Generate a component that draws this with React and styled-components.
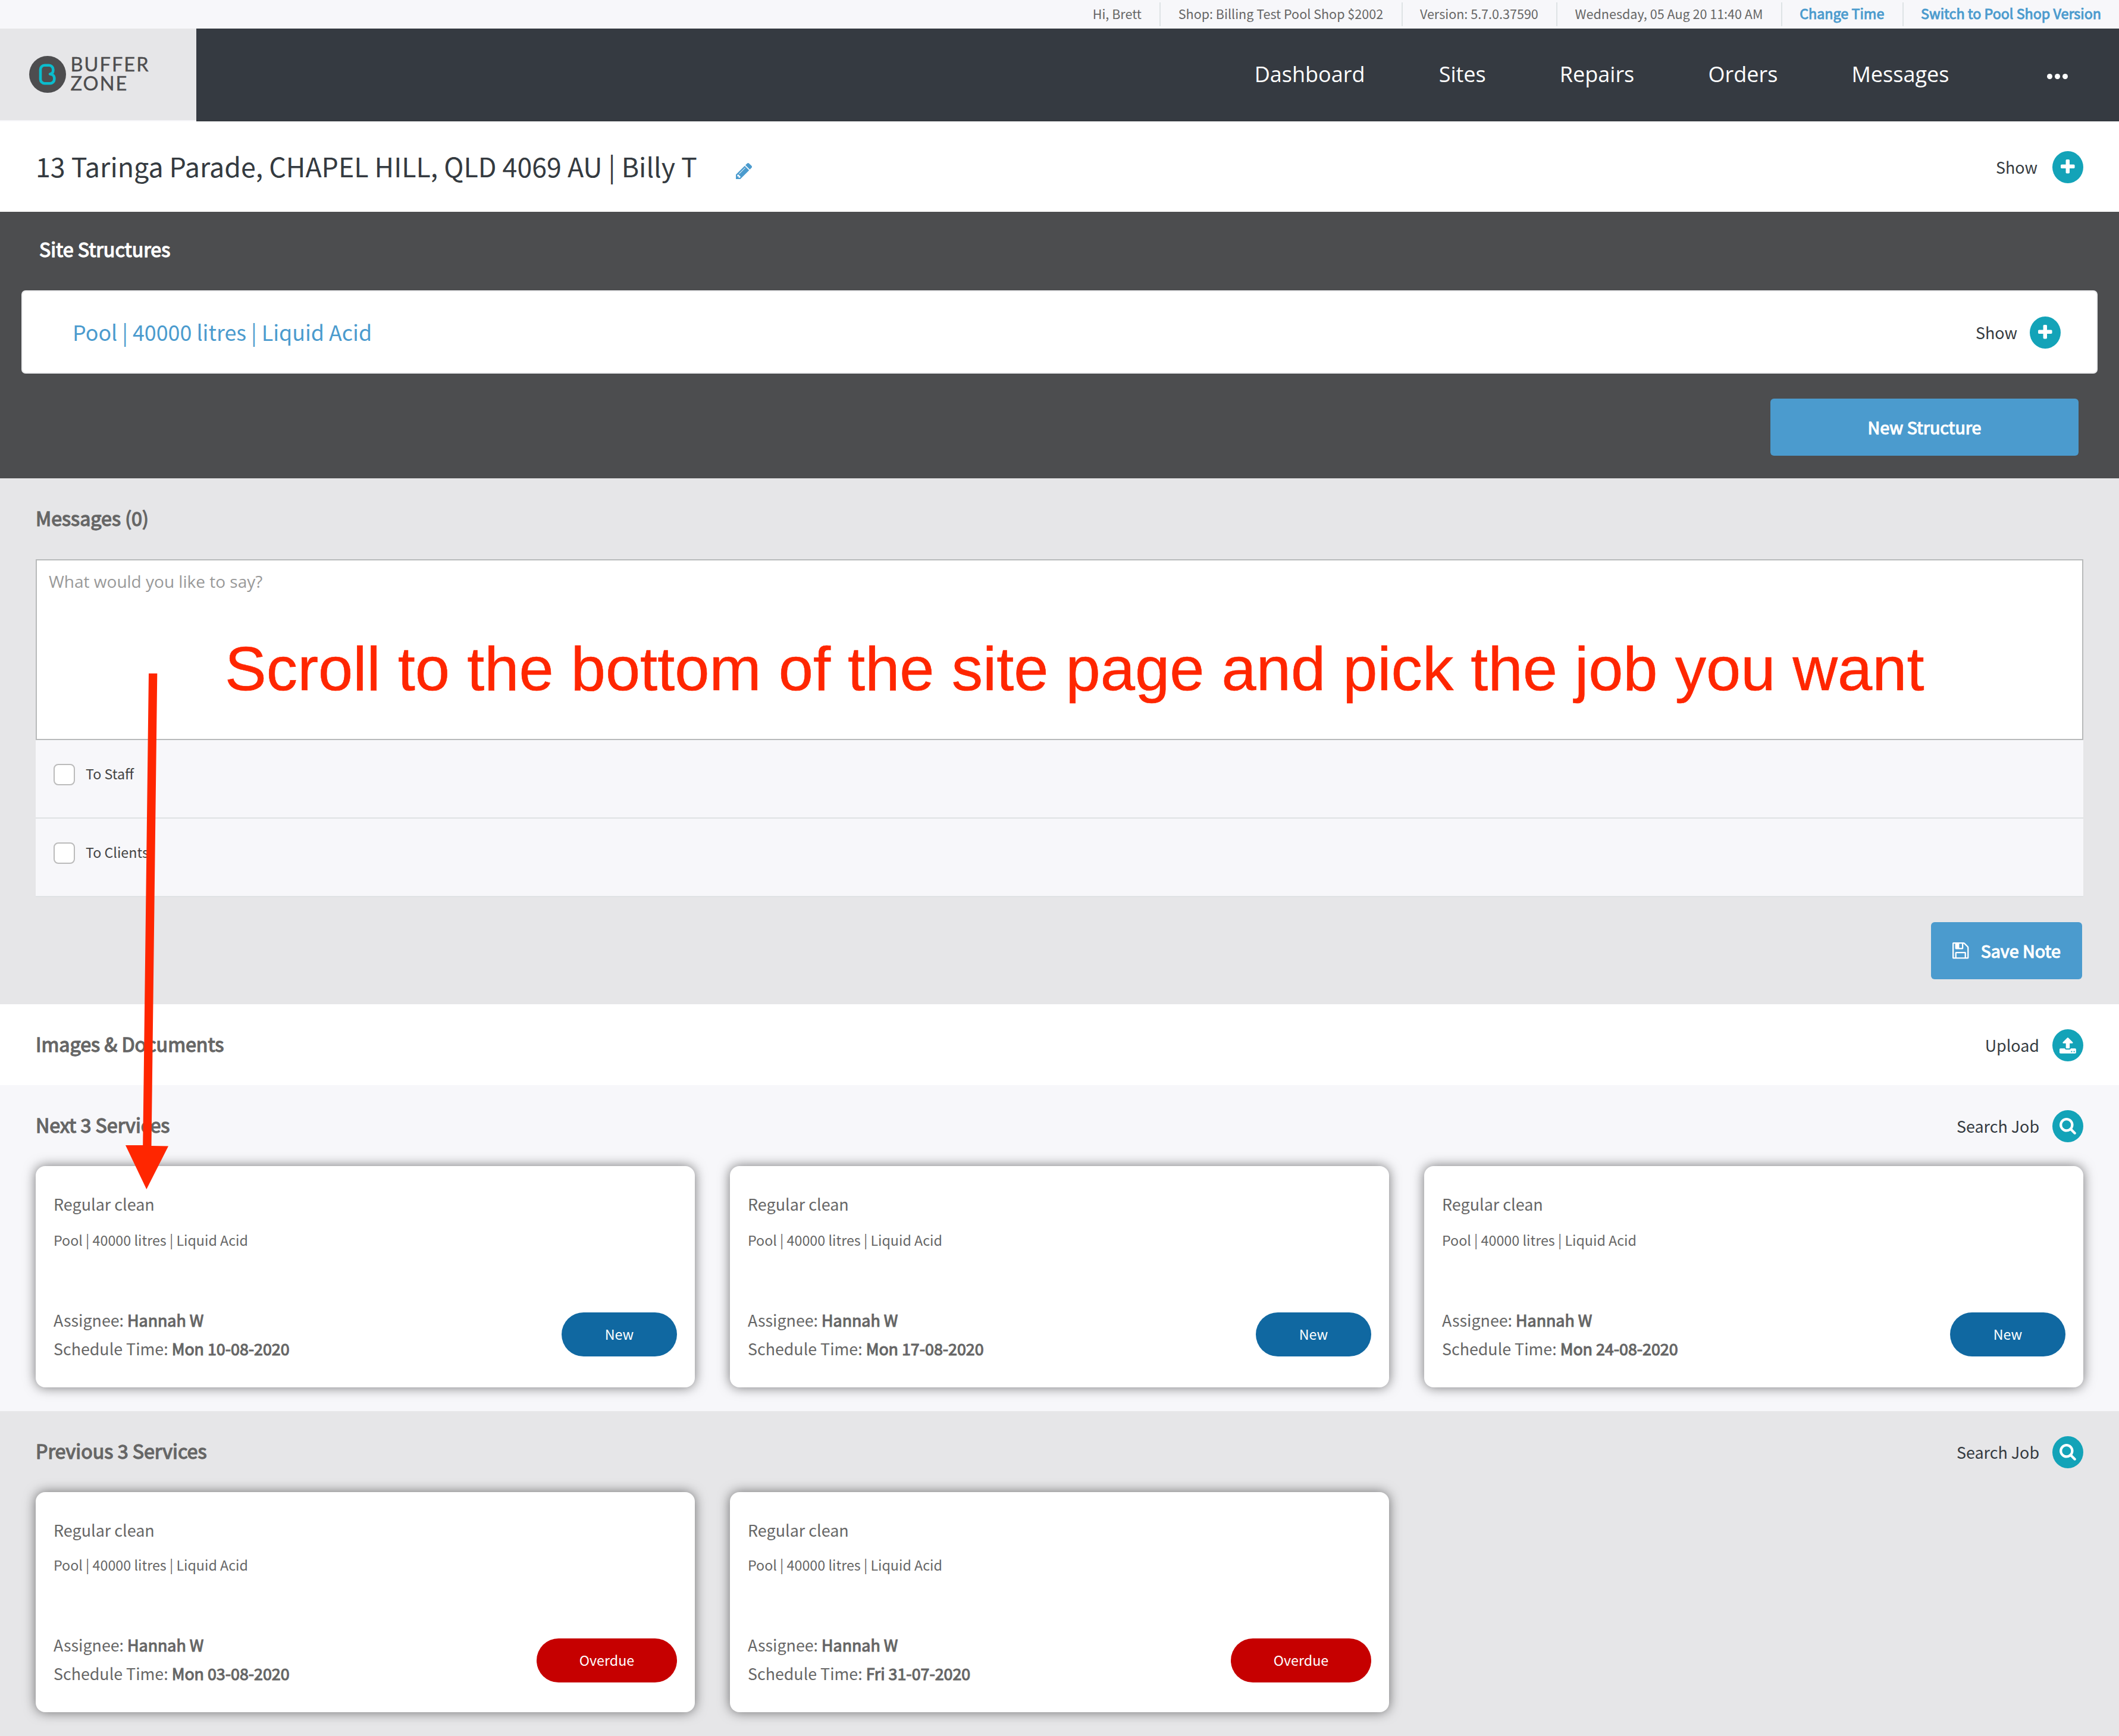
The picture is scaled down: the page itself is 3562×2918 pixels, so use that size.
import React from "react";
import styled, { createGlobalStyle, css } from "styled-components";

const GlobalStyle = createGlobalStyle`
  * { box-sizing: border-box; }
  html, body { margin: 0; padding: 0; }
  body { background: #e6e6e8; }
`;

const sourceFont = '"Noto Sans CJK JP", "Noto Sans", sans-serif';
const openFont = '"Open Sans", "Noto Sans", sans-serif';

const color = {
  ink: "#343a40",
  grey: "#666666",
  blue: "#4b9bce",
  teal: "#13a3b8",
  light: "#e6e6e8",
  pale: "#f7f7fa",
  nav: "#353a41",
  dark: "#4c4d4f",
};

/* The heavier weight is the regular face with a thin outline. */
const heavy = css`
  font-weight: 400;
  -webkit-text-stroke: 0.042em currentColor;
`;

const Page = styled.div`
  position: relative;
  width: 3562px;
  height: 2918px;
  overflow: hidden;
  font-family: ${sourceFont};
  color: ${color.grey};
  white-space: nowrap;
`;

/* ---------- top strip ---------- */

const TopBar = styled.div`
  display: flex;
  justify-content: flex-end;
  height: 48px;
  padding: 4px 0;
  background: ${color.pale};
`;

const TopItem = styled.span`
  display: flex;
  align-items: center;
  height: 40px;
  padding: 0 30.4px 2px 29.4px;
  font-size: 21.55px;
  line-height: 36px;
  border-right: 2px solid #dee3e5;

  &:last-child {
    padding-right: 30px;
    border-right: 0;
  }
`;

const TopLink = styled(TopItem)`
  ${heavy}
  padding-bottom: 4px;
  font-size: 23.3px;
  color: ${color.blue};
`;

/* ---------- header ---------- */

const Header = styled.header`
  display: flex;
  justify-content: space-between;
  height: 156px;
  background: ${color.nav};
`;

const Brand = styled.div`
  display: flex;
  align-items: center;
  gap: 7.5px;
  width: 330px;
  padding: 0 0 1px 49px;
  background: ${color.light};
  border-bottom: 2px solid ${color.pale};
`;

const BrandName = styled.div`
  display: flex;
  flex-direction: column;
  padding-bottom: 1px;
  font-family: Lato, sans-serif;
  font-size: 32.5px;
  line-height: 32px;
  letter-spacing: 2.05px;
  color: #4d4d4f;
  -webkit-text-stroke: 0.4px currentColor;
`;

const Nav = styled.nav`
  display: flex;
  align-items: center;
  gap: 124.2px;
  padding: 0 86px 3px 0;
  font-family: ${openFont};
  font-size: 36px;
  line-height: 50px;
  color: #fff;
`;

const More = styled.span`
  display: flex;
  gap: 4px;
  margin: 7px 0 0 40.5px;
`;

const Dot = styled.i`
  width: 9px;
  height: 9px;
  border-radius: 50%;
  background: #fff;
`;

/* ---------- shared parts ---------- */

const Row = styled.div`
  display: flex;
  align-items: center;
  justify-content: space-between;
`;

const Action = styled.div`
  display: flex;
  align-items: center;
  gap: ${(p) => p.$gap}px;
  font-size: 26.87px;
  line-height: 40px;
  color: ${color.ink};
`;

const ActionLabel = styled.span`
  padding-top: 2px;
`;

const Disc = styled.span`
  display: flex;
  align-items: center;
  justify-content: center;
  width: 52px;
  height: 54px;
  margin-top: 2px;
  padding-bottom: ${(p) => p.$lift || 0}px;
  border-radius: 50%;
  background: ${color.teal};
  color: #fff;
`;

const Heading = styled.h2`
  ${heavy}
  margin: 0;
  font-size: 32.24px;
  line-height: 48px;
  color: ${(p) => (p.$light ? "#fff" : color.grey)};
`;

const Button = styled.button`
  ${heavy}
  display: flex;
  align-items: center;
  justify-content: center;
  gap: 20px;
  width: ${(p) => p.$width}px;
  height: 96px;
  padding: 0;
  border: 0;
  border-radius: 6px;
  background: ${color.blue};
  color: #fff;
  font-family: inherit;
  font-size: 28.66px;
  line-height: 40px;
`;

const Glyph = styled.svg`
  display: block;
  flex: none;
  overflow: visible;
  fill: currentColor;
  stroke: none;
`;

/* ---------- site title ---------- */

const TitleBar = styled(Row)`
  height: 152px;
  padding: 0 60px;
  background: #fff;
`;

const Title = styled.h1`
  display: flex;
  align-items: center;
  gap: 65px;
  margin: 0 0 3px;
  font-size: 44.74px;
  font-weight: 400;
  line-height: 64px;
  color: ${color.ink};

  svg {
    margin-top: 18px;
    color: ${color.blue};
  }
`;

/* ---------- structures ---------- */

const Structures = styled.section`
  display: flex;
  flex-direction: column;
  height: 448px;
  padding: 38px 36px;
  background: ${color.dark};

  h2 {
    margin: 0 0 46px 30px;
  }

  button {
    align-self: flex-end;
    margin: 42px 32px 0 0;
  }
`;

const StructureCard = styled(Row)`
  height: 140px;
  padding: 0 60px 0 84px;
  border: 2px solid #ecedef;
  border-radius: 7px;
  background: #fff;
`;

const StructureName = styled.span`
  padding-bottom: 3px;
  font-size: 35.82px;
  line-height: 52px;
  color: ${color.blue};
`;

/* ---------- messages ---------- */

const Messages = styled.section`
  display: flex;
  flex-direction: column;
  height: 884px;
  padding: 42px 60px 0;
  background: ${color.light};

  > button {
    align-self: flex-end;
    margin: 42px 2px 0 0;
  }
`;

const MessageBox = styled.textarea`
  display: block;
  width: 100%;
  height: 304px;
  margin: 46px 0 0;
  padding: 15px 20px;
  border: 2px solid #b8babb;
  border-radius: 0;
  outline: 0;
  resize: none;
  background: #fff;
  font-family: ${openFont};
  font-size: 28px;
  line-height: 40px;

  &::placeholder {
    color: #999;
    opacity: 1;
  }
`;

const CheckRow = styled.label`
  display: flex;
  align-items: flex-start;
  gap: 18px;
  height: 132px;
  padding: 40px 30px 0;
  border-bottom: 2px solid #dfe2e4;
  background: ${color.pale};
  font-size: 23.28px;
  line-height: 33px;
  color: #444;
`;

const CheckBox = styled.span`
  width: 36px;
  height: 36px;
  border: 2px solid #bbb;
  border-radius: 8px;
  background: #fff;
`;

/* ---------- services ---------- */

const Section = styled.section`
  padding: 0 60px;
  background: ${(p) => p.$bg};
`;

const SectionHead = styled(Row)`
  height: 136px;

  h2 {
    margin-bottom: 4px;
  }
`;

const Cards = styled.div`
  display: grid;
  grid-template-columns: repeat(3, 1fr);
  gap: 59px;
  padding-bottom: 40px;
`;

const Card = styled.article`
  display: flex;
  flex-direction: column;
  height: ${(p) => (p.$late ? 370 : 372)}px;
  padding: 40px 30px 0;
  border-radius: 16px;
  background: #fff;
  box-shadow: 0 0 20px rgba(0, 0, 0, 0.54);
`;

const JobName = styled.div`
  font-size: 26.95px;
  line-height: 48px;
`;

const JobPool = styled.div`
  margin: ${(p) => (p.$late ? 14 : 16)}px 0 0;
  font-size: 23.28px;
  line-height: 40px;
`;

const JobFoot = styled.div`
  display: flex;
  align-items: flex-start;
  justify-content: space-between;
  margin-top: 90px;
`;

const JobFacts = styled.div`
  padding-top: 1px;
  font-size: 26.8px;
  line-height: 48px;

  b {
    ${heavy}
  }
`;

const Status = styled.span`
  display: flex;
  align-items: center;
  justify-content: center;
  width: ${(p) => (p.$late ? 236 : 194)}px;
  height: 74px;
  margin-top: ${(p) => (p.$late ? 14 : 12)}px;
  padding-bottom: 2px;
  border-radius: 37px;
  background: ${(p) => (p.$late ? "#c60000" : "#1068a1")};
  color: #fff;
  font-size: 23.28px;
  line-height: 36px;
`;

/* ---------- annotation ---------- */

const Note = styled.div`
  position: absolute;
  left: 378px;
  top: 1064px;
  font-family: "Liberation Sans", Arial, sans-serif;
  font-size: 104.66px;
  line-height: 120px;
  color: #ff2600;
  -webkit-text-stroke: 0.6px currentColor;
  pointer-events: none;
`;

const Arrow = styled.svg`
  position: absolute;
  left: 211px;
  top: 1132px;
  width: 72px;
  height: 867px;
  pointer-events: none;
`;

/* Each glyph: extents in font units (left 0, bottom, width, height) and a y-up outline. */
const glyphs = {
  pencil: {
    bottom: -128, w: 1515, h: 1515,
    d: "M363 0l91 91l-235 235l-91 -91v-107h128v-128h107zM886 928q0 22 -22 22q-10 0 -17 -7l-542 -542q-7 -7 -7 -17q0 -22 22 -22q10 0 17 7l542 542q7 7 7 17zM832 1120l416 -416l-832 -832h-416v416zM1515 1024q0 -53 -37 -90l-166 -166l-416 416l166 165q36 38 90 38q53 0 91 -38l235 -234q37 -39 37 -91z",
  },
  plus: {
    bottom: 0, w: 1408, h: 1408,
    d: "M1408 800v-192q0 -40 -28 -68t-68 -28h-416v-416q0 -40 -28 -68t-68 -28h-192q-40 0 -68 28t-28 68v416h-416q-40 0 -68 28t-28 68v192q0 40 28 68t68 28h416v416q0 40 28 68t68 28h192q40 0 68 -28t28 -68v-416h416q40 0 68 -28t28 -68z",
  },
  search: {
    bottom: -256, w: 1664, h: 1664,
    d: "M1152 704q0 185 -131.5 316.5t-316.5 131.5t-316.5 -131.5t-131.5 -316.5t131.5 -316.5t316.5 -131.5t316.5 131.5t131.5 316.5zM1664 -128q0 -52 -38 -90t-90 -38q-54 0 -90 38l-343 342q-179 -124 -399 -124q-143 0 -273.5 55.5t-225 150t-150 225t-55.5 273.5t55.5 273.5t150 225t225 150t273.5 55.5t273.5 -55.5t225 -150t150 -225t55.5 -273.5q0 -220 -124 -399l343 -343q37 -37 37 -90z",
  },
  upload: {
    bottom: -128, w: 1664, h: 1600,
    d: "M1280 64q0 26 -19 45t-45 19t-45 -19t-19 -45t19 -45t45 -19t45 19t19 45zM1536 64q0 26 -19 45t-45 19t-45 -19t-19 -45t19 -45t45 -19t45 19t19 45zM1664 288v-320q0 -40 -28 -68t-68 -28h-1472q-40 0 -68 28t-28 68v320q0 40 28 68t68 28h427q21 -56 70.5 -92t110.5 -36h256q61 0 110.5 36t70.5 92h427q40 0 68 -28t28 -68zM1339 936q-17 -40 -59 -40h-256v-448q0 -26 -19 -45t-45 -19h-256q-26 0 -45 19t-19 45v448h-256q-42 0 -59 40q-17 39 14 69l448 448q18 19 45 19t45 -19l448 -448q31 -30 14 -69z",
  },
  save: {
    bottom: -128, w: 1536, h: 1536,
    d: "M384 0h768v384h-768v-384zM1280 0h128v896q0 14 -10 38.5t-20 34.5l-281 281q-10 10 -34 20t-39 10v-416q0 -40 -28 -68t-68 -28h-576q-40 0 -68 28t-28 68v416h-128v-1280h128v416q0 40 28 68t68 28h832q40 0 68 -28t28 -68v-416zM896 928v320q0 13 -9.5 22.5t-22.5 9.5h-192q-13 0 -22.5 -9.5t-9.5 -22.5v-320q0 -13 9.5 -22.5t22.5 -9.5h192q13 0 22.5 9.5t9.5 22.5zM1536 896v-928q0 -40 -28 -68t-68 -28h-1344q-40 0 -68 28t-28 68v1344q0 40 28 68t68 28h928q40 0 88 -20t76 -48l280 -280q28 -28 48 -76t20 -88z",
  },
};

function Icon({ name, size }) {
  const g = glyphs[name];
  const k = size / 1792;
  return (
    <Glyph width={g.w * k} height={g.h * k} viewBox={`0 ${-(g.bottom + g.h)} ${g.w} ${g.h}`} aria-hidden="true">
      <path transform="scale(1,-1)" fillRule="evenodd" d={g.d} />
    </Glyph>
  );
}

function Logo() {
  return (
    <svg width="62" height="62" viewBox="0 0 62 62" aria-hidden="true">
      <circle cx="31" cy="31" r="31" fill="#4d4d4f" />
      <path
        d="M35 30.5C38.5 30 40.3 27.6 40.3 24.6V22.8a7 7 0 0 0-7-7H26a7 7 0 0 0-7 7V39.2a7 7 0 0 0 7 7H35.3a7 7 0 0 0 7-7V37.4C42.3 33 39 30.8 35 30.5z"
        fill="none"
        stroke="#0bbccd"
        strokeWidth="4.6"
        strokeLinejoin="round"
      />
    </svg>
  );
}

function CircleAction({ label, icon, gap, lift }) {
  return (
    <Action $gap={gap}>
      <ActionLabel>{label}</ActionLabel>
      <Disc $lift={lift}>
        <Icon name={icon} size={30} />
      </Disc>
    </Action>
  );
}

function JobCard({ date, late }) {
  return (
    <Card $late={late}>
      <JobName>Regular clean</JobName>
      <JobPool $late={late}>Pool | 40000 litres | Liquid Acid</JobPool>
      <JobFoot>
        <JobFacts>
          <div>Assignee: <b>Hannah W</b></div>
          <div>Schedule Time: <b>{date}</b></div>
        </JobFacts>
        <Status $late={late}>{late ? "Overdue" : "New"}</Status>
      </JobFoot>
    </Card>
  );
}

export default function App() {
  return (
    <Page>
      <GlobalStyle />
      <TopBar>
        <TopItem>Hi, Brett</TopItem>
        <TopItem>Shop: Billing Test Pool Shop $2002</TopItem>
        <TopItem>Version: 5.7.0.37590</TopItem>
        <TopItem>Wednesday, 05 Aug 20 11:40 AM</TopItem>
        <TopLink>Change Time</TopLink>
        <TopLink>Switch to Pool Shop Version</TopLink>
      </TopBar>

      <Header>
        <Brand>
          <Logo />
          <BrandName>
            <span>BUFFER</span>
            <span>ZONE</span>
          </BrandName>
        </Brand>
        <Nav>
          {["Dashboard", "Sites", "Repairs", "Orders", "Messages"].map((item) => (
            <span key={item}>{item}</span>
          ))}
          <More><Dot /><Dot /><Dot /></More>
        </Nav>
      </Header>

      <TitleBar>
        <Title>
          13 Taringa Parade, CHAPEL HILL, QLD 4069 AU | Billy T
          <Icon name="pencil" size={32} />
        </Title>
        <CircleAction label="Show" icon="plus" gap={25} lift={2} />
      </TitleBar>

      <Structures>
        <Heading $light>Site Structures</Heading>
        <StructureCard>
          <StructureName>Pool | 40000 litres | Liquid Acid</StructureName>
          <CircleAction label="Show" icon="plus" gap={21} lift={2} />
        </StructureCard>
        <Button $width={518}>New Structure</Button>
      </Structures>

      <Messages>
        <Heading>Messages (0)</Heading>
        <MessageBox placeholder="What would you like to say?" />
        <CheckRow><CheckBox />To Staff</CheckRow>
        <CheckRow><CheckBox />To Clients</CheckRow>
        <Button $width={254}>
          <Icon name="save" size={32} />
          Save Note
        </Button>
      </Messages>

      <Section $bg="#fff">
        <SectionHead>
          <Heading>Images &amp; Documents</Heading>
          <CircleAction label="Upload" icon="upload" gap={22} />
        </SectionHead>
      </Section>

      <Section $bg={color.pale}>
        <SectionHead>
          <Heading>Next 3 Services</Heading>
          <CircleAction label="Search Job" icon="search" gap={22} />
        </SectionHead>
        <Cards>
          <JobCard date="Mon 10-08-2020" />
          <JobCard date="Mon 17-08-2020" />
          <JobCard date="Mon 24-08-2020" />
        </Cards>
      </Section>

      <Section $bg={color.light}>
        <SectionHead>
          <Heading>Previous 3 Services</Heading>
          <CircleAction label="Search Job" icon="search" gap={22} />
        </SectionHead>
        <Cards>
          <JobCard date="Mon 03-08-2020" late />
          <JobCard date="Fri 31-07-2020" late />
        </Cards>
      </Section>

      <Note>Scroll to the bottom of the site page and pick the job you want</Note>
      <Arrow viewBox="0 0 72 867" aria-hidden="true">
        <path d="M39 0H53.3L43.5 794L72 794.5L35.3 867L0 793H29.2Z" fill="#ff2600" />
      </Arrow>
    </Page>
  );
}
